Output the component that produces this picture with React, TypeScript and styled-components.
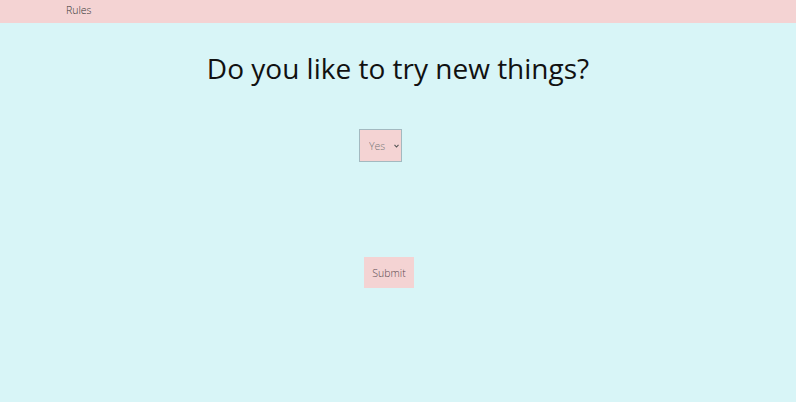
import styled, { createGlobalStyle } from 'styled-components';

const GlobalStyle = createGlobalStyle`
  html, body {
    margin: 0;
    padding: 0;
    background: #d8f5f7;
    font-family: "Open Sans", "Liberation Sans", sans-serif;
  }
`;

const Page = styled.div`
  width: 796px;
  height: 402px;
  background: #d8f5f7;
  display: flex;
  flex-direction: column;
`;

const NavBar = styled.nav`
  box-sizing: border-box;
  height: 23px;
  background: #f4d3d3;
  display: flex;
  align-items: flex-start;
  padding: 2px 0 0 66px;
`;

const NavLink = styled.a`
  font-size: 10.5px;
  line-height: 16px;
  font-weight: 300;
  color: #333;
  text-decoration: none;
`;

const Title = styled.h1`
  margin: 26px 0 0;
  text-align: center;
  font-size: 28px;
  font-weight: 400;
  line-height: 38px;
  color: #111;
`;

const Form = styled.form`
  display: flex;
  flex-direction: column;
  align-items: center;
`;

const Row = styled.div<{ $shift: number; $top: number }>`
  display: flex;
  justify-content: center;
  padding-right: ${({ $shift }) => $shift}px;
  margin-top: ${({ $top }) => $top}px;
`;

const SelectWrap = styled.div`
  position: relative;
  display: flex;
`;

const Select = styled.select`
  box-sizing: border-box;
  appearance: none;
  width: 43px;
  height: 33px;
  background: #f4d3d3;
  border: 1px solid #a3b9c0;
  border-radius: 0;
  font-family: "Open Sans", "Liberation Sans", sans-serif;
  font-size: 10.5px;
  font-weight: 300;
  color: #777;
  padding: 0 0 0 9px;
  outline: none;
`;

const Chevron = styled.svg`
  position: absolute;
  right: 3px;
  top: 15px;
  width: 5px;
  height: 4px;
  pointer-events: none;
`;

const SubmitButton = styled.button`
  width: 50px;
  height: 31px;
  background: #f4d3d3;
  border: none;
  font-family: "Open Sans", "Liberation Sans", sans-serif;
  font-size: 10.5px;
  font-weight: 300;
  color: #5a4a50;
  padding: 0;
  cursor: pointer;
`;

export default function App() {
  return (
    <Page>
      <GlobalStyle />
      <NavBar>
        <NavLink href="#">Rules</NavLink>
      </NavBar>
      <Title>Do you like to try new things?</Title>
      <Form onSubmit={(e) => e.preventDefault()}>
        <Row $shift={35} $top={42}>
          <SelectWrap>
            <Select defaultValue="Yes">
              <option>Yes</option>
              <option>No</option>
            </Select>
            <Chevron viewBox="0 0 5 4">
              <path d="M0.5 0.8 L2.5 3 L4.5 0.8" fill="none" stroke="#555" strokeWidth="1.1" />
            </Chevron>
          </SelectWrap>
        </Row>
        <Row $shift={18} $top={95}>
          <SubmitButton type="submit">Submit</SubmitButton>
        </Row>
      </Form>
    </Page>
  );
}
